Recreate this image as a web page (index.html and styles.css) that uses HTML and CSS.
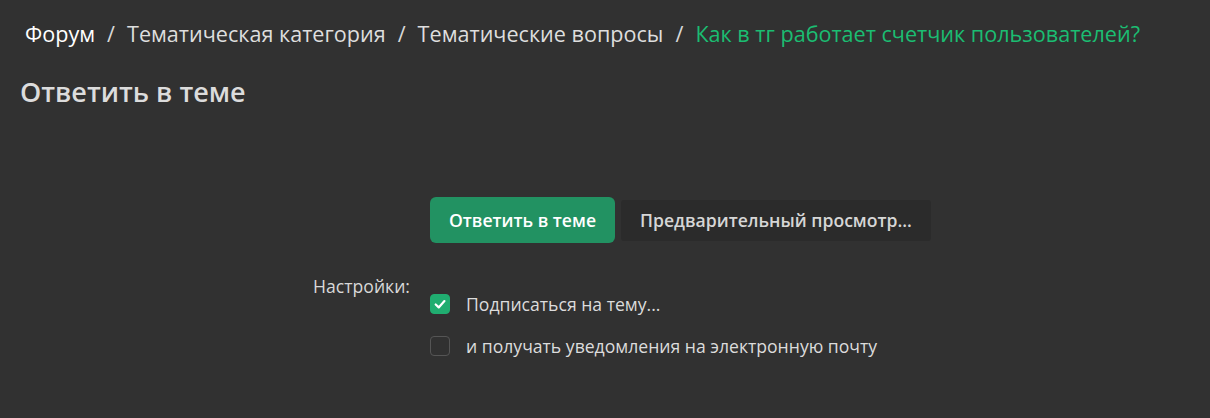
FILE: index.html
```html
<!DOCTYPE html>
<html>
<head>
    <title>Ответить в теме</title>
    <link rel="stylesheet" href="styles.css">
</head>
<body>
    <div class="page">
        <ul class="breadcrumbs">
            <li><a href="#" class="crumb crumb-root">Форум</a></li>
            <li class="sep">/</li>
            <li><a href="#" class="crumb">Тематическая категория</a></li>
            <li class="sep">/</li>
            <li><a href="#" class="crumb">Тематические вопросы</a></li>
            <li class="sep">/</li>
            <li><a href="#" class="crumb crumb-current">Как в тг работает счетчик пользователей?</a></li>
        </ul>

        <h1 class="pageTitle">Ответить в теме</h1>

        <form class="replyForm">
            <div class="formRow formRow-buttons">
                <div class="formRow-label"></div>
                <div class="formRow-input buttonGroup">
                    <button type="submit" class="button button-primary">Ответить в теме</button>
                    <button type="button" class="button button-secondary">Предварительный просмотр...</button>
                </div>
            </div>

            <div class="formRow formRow-options">
                <div class="formRow-label">Настройки:</div>
                <div class="formRow-input">
                    <label class="checkOption">
                        <span class="checkBox checkBox-on">
                            <svg viewBox="0 0 12 12" width="14" height="14"><path d="M2.3 6.4 L4.9 8.9 L9.8 3.5" fill="none" stroke="#fff" stroke-width="1.9" stroke-linecap="round" stroke-linejoin="round"/></svg>
                        </span>
                        <span>Подписаться на тему...</span>
                    </label>
                    <label class="checkOption">
                        <span class="checkBox"></span>
                        <span>и получать уведомления на электронную почту</span>
                    </label>
                </div>
            </div>
        </form>
    </div>
</body>
</html>
```

FILE: styles.css
```css
html, body {
    margin: 0;
    background-color: #313131;
    height: 100%;
}
body {
    font-family: "Open Sans", "Noto Sans", sans-serif;
    color: #dcdcdc;
}
.page {
    padding: 18px 20px 0 20px;
}
.breadcrumbs {
    list-style: none;
    margin: 0;
    padding: 0 0 0 5px;
    display: flex;
    align-items: center;
    font-size: 21.6px;
    line-height: 32px;
}
.breadcrumbs .sep {
    color: #d8d8d8;
    padding: 0 12px;
}
.crumb {
    color: #dedede;
    text-decoration: none;
}
.crumb-root {
    color: #ffffff;
}
.crumb-current {
    color: #1bbd72;
}
.pageTitle {
    margin: 25px 0 0 0;
    font-size: 27px;
    font-weight: 600;
    line-height: 34px;
    color: #dcdcdc;
}
.replyForm {
    margin-top: 88px;
}
.formRow {
    display: flex;
    gap: 20px;
}
.formRow-label {
    width: 390px;
    text-align: right;
    font-size: 17.6px;
    color: #d8d8d8;
}
.buttonGroup {
    display: flex;
    align-items: center;
    gap: 6px;
}
.button {
    font-family: inherit;
    font-size: 17.6px;
    font-weight: 600;
    border: none;
    cursor: pointer;
}
.button-primary {
    background-color: #229262;
    color: #ffffff;
    height: 46px;
    padding: 0 19px;
    border-radius: 6px;
}
.button-primary:hover {
    background-color: #1f8558;
}
.button-secondary {
    background-color: #2b2b2b;
    color: #d6d6d6;
    height: 41px;
    padding: 0 19px;
    border-radius: 3px;
}
.formRow-options {
    margin-top: 27px;
}
.formRow-options .formRow-label {
    line-height: 24px;
    padding-top: 4px;
}
.formRow-options .formRow-input {
    padding-top: 22px;
}
.checkOption {
    display: flex;
    align-items: center;
    gap: 16px;
    font-size: 17.6px;
    line-height: 24px;
    color: #dcdcdc;
    margin-bottom: 18px;
    cursor: pointer;
}
.checkBox {
    width: 18px;
    height: 18px;
    border: 1px solid #555555;
    border-radius: 4px;
    display: flex;
    align-items: center;
    justify-content: center;
    box-sizing: content-box;
}
.checkBox-on {
    background-color: #20ad70;
    border-color: #20ad70;
}
```
